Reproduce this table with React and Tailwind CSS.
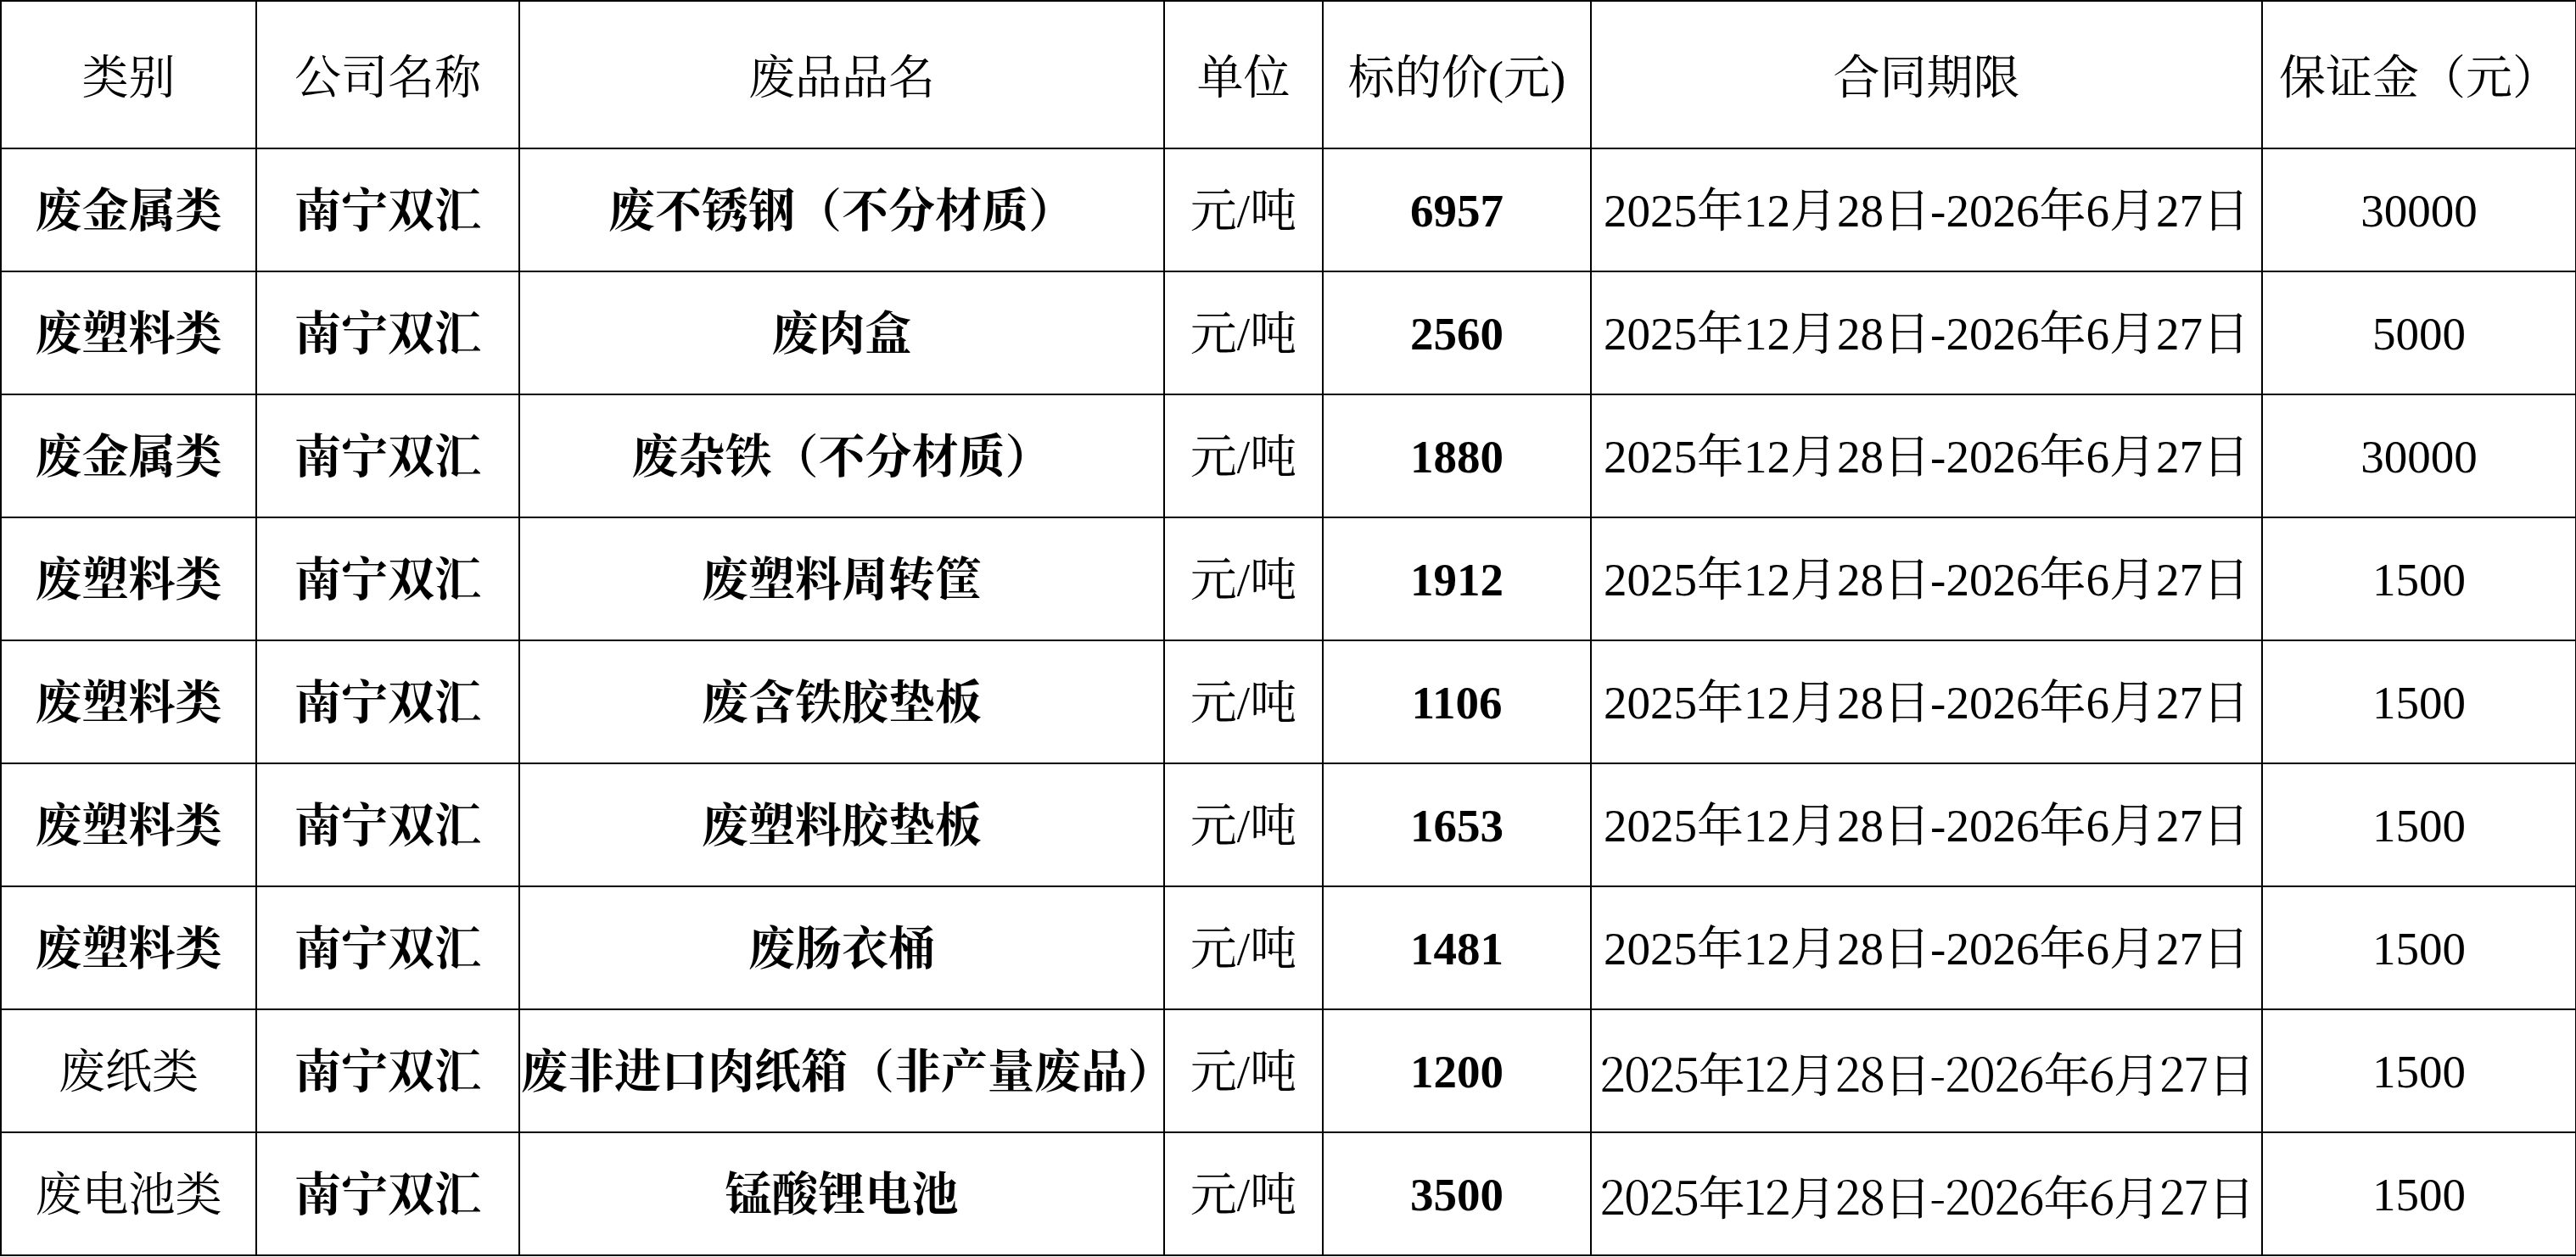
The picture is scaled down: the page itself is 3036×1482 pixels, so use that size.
import React from "react";

const rows = [
  { cat: "废金属类", catBold: true, name: "废不锈钢（不分材质）", price: "6957", dep: "30000", alt: false },
  { cat: "废塑料类", catBold: true, name: "废肉盒", price: "2560", dep: "5000", alt: false },
  { cat: "废金属类", catBold: true, name: "废杂铁（不分材质）", price: "1880", dep: "30000", alt: false },
  { cat: "废塑料类", catBold: true, name: "废塑料周转筐", price: "1912", dep: "1500", alt: false },
  { cat: "废塑料类", catBold: true, name: "废含铁胶垫板", price: "1106", dep: "1500", alt: false },
  { cat: "废塑料类", catBold: true, name: "废塑料胶垫板", price: "1653", dep: "1500", alt: false },
  { cat: "废塑料类", catBold: true, name: "废肠衣桶", price: "1481", dep: "1500", alt: false },
  { cat: "废纸类", catBold: false, name: "废非进口肉纸箱（非产量废品）", price: "1200", dep: "1500", alt: true, left: true },
  { cat: "废电池类", catBold: false, name: "锰酸锂电池", price: "3500", dep: "1500", alt: true },
];

const cell = "border-2 border-black text-center align-middle px-0 pb-0 whitespace-nowrap overflow-visible";

export default function App() {
  return (
    <div className="w-[3036px] h-[1482px] bg-white overflow-hidden font-['Liberation_Serif','Noto_Serif_CJK_SC','Noto_Sans_CJK_SC',serif] text-[55px] leading-none text-black">
      <table className="border-collapse table-fixed w-[3035px]">
        <colgroup>
          <col className="w-[301px]" />
          <col className="w-[310px]" />
          <col className="w-[760px]" />
          <col className="w-[187px]" />
          <col className="w-[316px]" />
          <col className="w-[791px]" />
          <col className="w-[370px]" />
        </colgroup>
        <thead>
          <tr className="h-[174px]">
            <th className={cell + " font-normal pt-[6px]"}>类别</th>
            <th className={cell + " font-normal pt-[6px]"}>公司名称</th>
            <th className={cell + " font-normal pt-[6px]"}>废品品名</th>
            <th className={cell + " font-normal pt-[6px]"}>单位</th>
            <th className={cell + " font-normal pt-[6px]"}>标的价(元)</th>
            <th className={cell + " font-normal pt-[6px]"}>合同期限</th>
            <th className={cell + " font-normal pt-[6px]"}>保证金（元）</th>
          </tr>
        </thead>
        <tbody>
          {rows.map((r, i) => (
            <tr key={i} className="h-[145px]">
              <td className={cell + " pt-[2px]" + (r.catBold ? " font-bold" : " font-normal")}>{r.cat}</td>
              <td className={cell + " pt-[2px] font-bold"}>南宁双汇</td>
              <td className={cell + " pt-[2px] font-bold" + (r.left ? " text-left pl-[1px]" : "")}>{r.name}</td>
              <td className={cell + " pt-[2px]"}>元/吨</td>
              <td className={cell + " pt-[2px] font-bold"}>{r.price}</td>
              <td className={cell + " pt-[2px]" + (r.alt ? " font-['Noto_Serif_CJK_SC','Noto_Sans_CJK_SC',serif] tracking-[-1.5px]" : "")}>
                2025年12月28日-2026年6月27日
              </td>
              <td className={cell + " pt-[2px]"}>{r.dep}</td>
            </tr>
          ))}
        </tbody>
      </table>
    </div>
  );
}
